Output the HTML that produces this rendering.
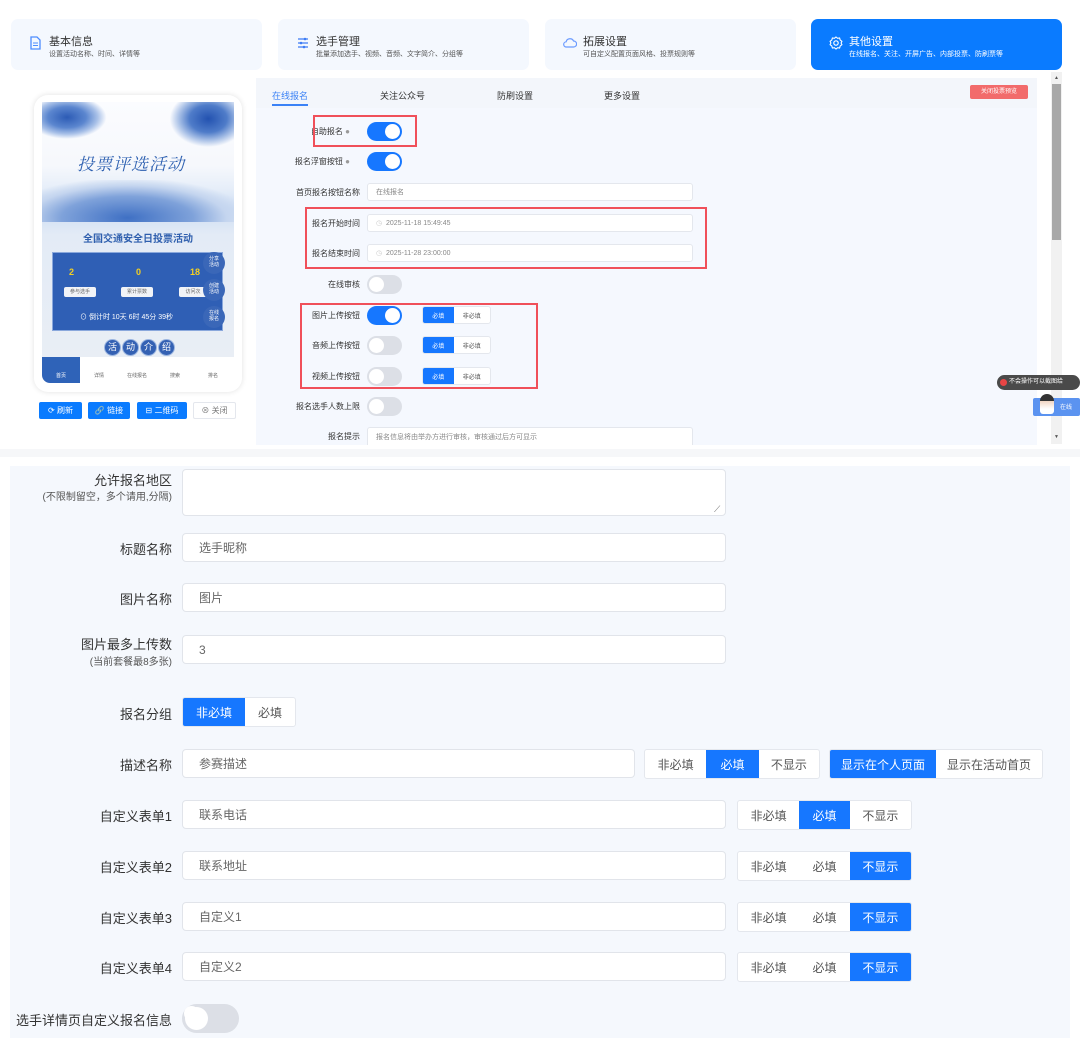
<!DOCTYPE html>
<html><head><meta charset="utf-8"><style>
*{box-sizing:border-box;margin:0;padding:0}
body{width:1080px;height:1049px;background:#fff;font-family:"Liberation Sans","Noto Sans CJK SC",sans-serif;position:relative;overflow:hidden;color:#333}
.a{position:absolute}
.card{position:absolute;top:19px;height:51px;width:251px;background:#f4f8fe;border-radius:7px}
.card .t{position:absolute;left:38px;top:14px;font-size:11px;color:#333}
.card .s{position:absolute;left:38px;top:30px;font-size:7px;color:#555;white-space:nowrap}
.card.on{background:#0a7bff}.card.on .t,.card.on .s{color:#fff}
.lbl{position:absolute;font-size:8px;color:#333;text-align:right;width:120px;white-space:nowrap}
.tg{position:absolute;width:35px;height:19px;border-radius:10px;background:#dcdfe6}
.tg::after{content:"";position:absolute;left:2px;top:2px;width:15px;height:15px;border-radius:50%;background:#fff}
.tg.on{background:#1677ff}.tg.on::after{left:18px}
.inp{position:absolute;background:#fff;border:1px solid #e4e7ed;border-radius:3px;font-size:7px;color:#888;padding-left:8px;display:flex;align-items:center}
.rb{position:absolute;border:2px solid #f0505a}
.seg{position:absolute;display:flex;border:1px solid #e4e7ed;border-radius:3px;overflow:hidden;background:#fff}
.seg div{display:flex;align-items:center;justify-content:center;color:#555}
.seg div.on{background:#1677ff;color:#fff}
.L{position:absolute;right:908px;font-size:13px;color:#333;text-align:right;white-space:nowrap}
.I{position:absolute;left:182px;width:544px;height:29px;background:#fff;border:1px solid #e1e4ea;border-radius:4px;font-size:12px;color:#666;padding-left:16px;display:flex;align-items:center}
.S{height:30px;font-size:12px}
.btn{position:absolute;top:402px;height:17px;background:#0a7bff;color:#fff;font-size:8px;display:flex;align-items:center;justify-content:center;border-radius:2px}
</style></head><body>
<!-- top cards -->
<div class="card" style="left:11px"><svg class="a" style="left:19px;top:17px" width="11" height="14" viewBox="0 0 11 14"><path d="M1 1h6l3 3v9H1z" fill="none" stroke="#4d8dff" stroke-width="1.3"/><path d="M3 7h5M3 9.5h5" stroke="#4d8dff"/></svg><div class="t">基本信息</div><div class="s">设置活动名称、时间、详情等</div></div>
<div class="card" style="left:278px"><svg class="a" style="left:19px;top:18px" width="12" height="12" viewBox="0 0 12 12"><path d="M1 2h10M1 6h10M1 10h10" stroke="#3d7cf5" stroke-width="1.2"/><circle cx="8" cy="2" r="1.3" fill="#3d7cf5"/><circle cx="4" cy="6" r="1.3" fill="#3d7cf5"/><circle cx="7" cy="10" r="1.3" fill="#3d7cf5"/></svg><div class="t">选手管理</div><div class="s">批量添加选手、视频、音频、文字简介、分组等</div></div>
<div class="card" style="left:545px"><svg class="a" style="left:18px;top:18px" width="14" height="11" viewBox="0 0 14 11"><path d="M3.5 10a2.6 2.6 0 0 1-.4-5.2A4 4 0 0 1 10.6 4a3 3 0 0 1 0 6z" fill="none" stroke="#6b9bff" stroke-width="1.2"/></svg><div class="t">拓展设置</div><div class="s">可自定义配置页面风格、投票规则等</div></div>
<div class="card on" style="left:811px"><svg class="a" style="left:18px;top:17px" width="14" height="14" viewBox="0 0 14 14"><circle cx="7" cy="7" r="2.2" fill="none" stroke="#fff" stroke-width="1.2"/><path d="M7 1l1.6 1.3 2-.3.6 2 1.7 1.3-.8 1.7.8 1.7-1.7 1.3-.6 2-2-.3L7 13l-1.6-1.3-2 .3-.6-2L1.1 8.7 1.9 7l-.8-1.7L2.8 4l.6-2 2 .3z" fill="none" stroke="#fff" stroke-width="1.1"/></svg><div class="t">其他设置</div><div class="s">在线报名、关注、开屏广告、内部投票、防刷票等</div></div>

<!-- phone -->
<div class="a" style="left:34px;top:95px;width:208px;height:297px;background:#fff;border-radius:14px;box-shadow:0 0 6px rgba(0,0,0,.12)"></div>
<div class="a" style="left:42px;top:102px;width:192px;height:255px;overflow:hidden;background:linear-gradient(#fbfcff 0,#f6f8fc 25%,#e6eef9 34%,#cdddf3 42%,#e3ebf6 52%,#e9eef5 100%)">
 <div class="a" style="left:-5px;top:-5px;width:75px;height:45px;background:radial-gradient(ellipse at 40% 45%,#2c5bb5 0,#5b86cf 30%,#a9c1e8 48%,transparent 62%)"></div>
 <div class="a" style="left:125px;top:-8px;width:75px;height:55px;background:radial-gradient(ellipse at 55% 45%,#2352b0 0,#4f7cc9 32%,#a7bfe6 50%,transparent 66%)"></div>
 <div class="a" style="left:35px;top:48px;font-size:17px;color:#2c5fb0;font-family:'Noto Serif CJK SC',serif;font-style:italic;letter-spacing:1px">投票评选活动</div>
 <div class="a" style="left:-10px;top:78px;width:212px;height:42px;background:radial-gradient(ellipse at 45% 90%,#3f70c4 0,#7fa2da 40%,#c4d5ef 60%,transparent 75%)"></div>
 <div class="a" style="left:0;top:128px;width:192px;text-align:center;font-size:10px;font-weight:bold;color:#2f5fae">全国交通安全日投票活动</div>
 <div class="a" style="left:10px;top:150px;width:171px;height:79px;background:#2f5fb5;border:1px solid #8aa8dc"></div>
 <div class="a" style="left:27px;top:165px;font-size:9px;font-weight:bold;color:#f5d020">2</div>
 <div class="a" style="left:94px;top:165px;font-size:9px;font-weight:bold;color:#f5d020">0</div>
 <div class="a" style="left:148px;top:165px;font-size:9px;font-weight:bold;color:#f5d020">18</div>
 <div class="a" style="left:22px;top:185px;width:32px;height:10px;background:#f1f3f7;border-radius:2px;font-size:5px;color:#666;text-align:center;line-height:10px">参与选手</div>
 <div class="a" style="left:79px;top:185px;width:32px;height:10px;background:#f1f3f7;border-radius:2px;font-size:5px;color:#666;text-align:center;line-height:10px">累计票数</div>
 <div class="a" style="left:137px;top:185px;width:28px;height:10px;background:#f1f3f7;border-radius:2px;font-size:5px;color:#666;text-align:center;line-height:10px">访问次</div>
 <div class="a" style="left:38px;top:210px;font-size:7px;color:#fff;white-space:nowrap">⊙ 倒计时 10天 6时 45分 39秒</div>
 <div class="a" style="left:161px;top:150px;width:22px;height:22px;border-radius:50%;background:#3a67b8;color:#fff;font-size:5px;text-align:center;padding-top:4px;line-height:6px">分享<br>活动</div>
 <div class="a" style="left:161px;top:177px;width:22px;height:22px;border-radius:50%;background:#3a67b8;color:#fff;font-size:5px;text-align:center;padding-top:4px;line-height:6px">创建<br>活动</div>
 <div class="a" style="left:161px;top:204px;width:22px;height:22px;border-radius:50%;background:#3a67b8;color:#fff;font-size:5px;text-align:center;padding-top:4px;line-height:6px">在线<br>报名</div>
 <div class="a" style="left:62px;top:237px;display:flex;gap:1px">
  <div style="width:17px;height:17px;border-radius:50%;background:#3461b3;border:1px solid #9bb5e0;color:#fff;font-size:9px;text-align:center;line-height:15px">活</div>
  <div style="width:17px;height:17px;border-radius:50%;background:#3461b3;border:1px solid #9bb5e0;color:#fff;font-size:9px;text-align:center;line-height:15px">动</div>
  <div style="width:17px;height:17px;border-radius:50%;background:#3461b3;border:1px solid #9bb5e0;color:#fff;font-size:9px;text-align:center;line-height:15px">介</div>
  <div style="width:17px;height:17px;border-radius:50%;background:#3461b3;border:1px solid #9bb5e0;color:#fff;font-size:9px;text-align:center;line-height:15px">绍</div>
 </div>
</div>
<div class="a" style="left:42px;top:357px;width:192px;height:26px;background:#fff;display:flex;font-size:5px;color:#666">
 <div style="width:38px;background:#2f63b8;color:#fff;text-align:center;padding-top:15px;border-bottom-left-radius:8px">首页</div>
 <div style="width:38px;text-align:center;padding-top:15px">详情</div>
 <div style="width:38px;text-align:center;padding-top:15px">在线报名</div>
 <div style="width:38px;text-align:center;padding-top:15px">搜索</div>
 <div style="width:38px;text-align:center;padding-top:15px">排名</div>
</div>
<div class="btn" style="left:39px;width:43px">⟳ 刷新</div>
<div class="btn" style="left:88px;width:42px">🔗 链接</div>
<div class="btn" style="left:137px;width:50px">⊟ 二维码</div>
<div class="btn" style="left:193px;width:43px;background:#fff;color:#777;border:1px solid #e4e7ed">⊗ 关闭</div>

<!-- right panel -->
<div class="a" style="left:256px;top:78px;width:781px;height:367px;background:#f5f8fe"></div>
<div class="a" style="left:256px;top:78px;width:781px;height:30px;background:#f3f6fb"></div>
<div class="a" style="left:272px;top:89px;font-size:9px;color:#3b82f6">在线报名</div>
<div class="a" style="left:272px;top:104px;width:36px;height:2px;background:#3b82f6"></div>
<div class="a" style="left:380px;top:89px;font-size:9px;color:#333">关注公众号</div>
<div class="a" style="left:497px;top:89px;font-size:9px;color:#333">防刷设置</div>
<div class="a" style="left:604px;top:89px;font-size:9px;color:#333">更多设置</div>
<div class="a" style="left:970px;top:85px;width:58px;height:14px;background:#f26b6b;border-radius:2px;color:#fff;font-size:6px;text-align:center;line-height:14px">关闭投票预览</div>
<div class="a" style="left:1051px;top:72px;width:11px;height:372px;background:#f1f1f1"></div>
<div class="a" style="left:1052px;top:84px;width:9px;height:156px;background:#a8a8a8"></div>
<div class="a" style="left:1054px;top:75px;font-size:5px;color:#555">▲</div>
<div class="a" style="left:1054px;top:434px;font-size:5px;color:#555">▼</div>

<div class="lbl" style="left:230px;top:126px">自助报名 <span style="color:#999">●</span></div>
<div class="tg on" style="left:367px;top:122px"></div>
<div class="lbl" style="left:230px;top:156px">报名浮窗按钮 <span style="color:#999">●</span></div>
<div class="tg on" style="left:367px;top:152px"></div>
<div class="lbl" style="left:240px;top:187px">首页报名按钮名称</div>
<div class="inp" style="left:367px;top:183px;width:326px;height:18px">在线报名</div>
<div class="lbl" style="left:240px;top:218px">报名开始时间</div>
<div class="inp" style="left:367px;top:214px;width:326px;height:18px"><span style="color:#ccc">◷</span>&nbsp; 2025-11-18 15:49:45</div>
<div class="lbl" style="left:240px;top:248px">报名结束时间</div>
<div class="inp" style="left:367px;top:244px;width:326px;height:18px"><span style="color:#ccc">◷</span>&nbsp; 2025-11-28 23:00:00</div>
<div class="lbl" style="left:240px;top:279px">在线审核</div>
<div class="tg" style="left:367px;top:275px"></div>
<div class="lbl" style="left:240px;top:310px">图片上传按钮</div>
<div class="tg on" style="left:367px;top:306px"></div>
<div class="lbl" style="left:240px;top:340px">音频上传按钮</div>
<div class="tg" style="left:367px;top:336px"></div>
<div class="lbl" style="left:240px;top:371px">视频上传按钮</div>
<div class="tg" style="left:367px;top:367px"></div>
<div class="seg" style="left:422px;top:306px;width:69px;height:18px;font-size:6px"><div class="on" style="width:31px">必填</div><div style="width:37px">非必填</div></div>
<div class="seg" style="left:422px;top:336px;width:69px;height:18px;font-size:6px"><div class="on" style="width:31px">必填</div><div style="width:37px">非必填</div></div>
<div class="seg" style="left:422px;top:367px;width:69px;height:18px;font-size:6px"><div class="on" style="width:31px">必填</div><div style="width:37px">非必填</div></div>
<div class="lbl" style="left:240px;top:401px">报名选手人数上限</div>
<div class="tg" style="left:367px;top:397px"></div>
<div class="lbl" style="left:240px;top:431px">报名提示</div>
<div class="inp" style="left:367px;top:427px;width:326px;height:18px;border-bottom:none;border-radius:3px 3px 0 0">报名信息将由举办方进行审核，审核通过后方可显示</div>
<div class="a" style="left:256px;top:445px;width:781px;height:4px;background:#fff"></div>
<div class="rb" style="left:313px;top:115px;width:104px;height:32px"></div>
<div class="rb" style="left:305px;top:207px;width:402px;height:62px"></div>
<div class="rb" style="left:300px;top:303px;width:238px;height:86px"></div>
<div class="a" style="left:997px;top:375px;width:83px;height:15px;background:#4a4a4a;border-radius:8px;color:#fff;font-size:6px;line-height:15px;padding-left:12px;white-space:nowrap;overflow:hidden">不会操作可以截图给</div>
<div class="a" style="left:1000px;top:379px;width:7px;height:7px;border-radius:50%;background:#e84545"></div>
<div class="a" style="left:1033px;top:398px;width:47px;height:18px;background:#5b93f0;border-radius:2px"></div>
<div class="a" style="left:1040px;top:394px;width:14px;height:20px;border-radius:7px 7px 3px 3px;background:linear-gradient(#333 0,#333 35%,#f2d6c4 36%,#fff 75%)"></div>
<div class="a" style="left:1060px;top:402px;font-size:6px;color:#fff">在线</div>
<div class="a" style="left:0;top:449px;width:1080px;height:8px;background:#f6f7f9"></div>

<!-- bottom -->
<div class="a" style="left:10px;top:466px;width:1060px;height:572px;background:#f5f8fd"></div>
<div class="L" style="top:470px">允许报名地区</div>
<div class="L" style="top:488px;font-size:10px;color:#555">(不限制留空，多个请用,分隔)</div>
<div class="I" style="top:469px;height:47px;align-items:flex-start"></div>
<div class="a" style="left:714px;top:504px;font-size:9px;color:#777">⟋</div>
<div class="L" style="top:539px">标题名称</div><div class="I" style="top:533px">选手昵称</div>
<div class="L" style="top:589px">图片名称</div><div class="I" style="top:583px">图片</div>
<div class="L" style="top:634px">图片最多上传数</div>
<div class="L" style="top:653px;font-size:10px;color:#555">(当前套餐最8多张)</div>
<div class="I" style="top:635px">3</div>
<div class="L" style="top:704px">报名分组</div>
<div class="seg S" style="left:182px;top:697px;width:114px"><div class="on" style="width:63px">非必填</div><div style="width:51px">必填</div></div>
<div class="L" style="top:755px">描述名称</div>
<div class="I" style="top:749px;width:453px">参赛描述</div>
<div class="seg S" style="left:644px;top:749px;width:176px"><div style="width:62px">非必填</div><div class="on" style="width:53px">必填</div><div style="width:61px">不显示</div></div>
<div class="seg S" style="left:829px;top:749px;width:214px"><div class="on" style="width:107px">显示在个人页面</div><div style="width:107px">显示在活动首页</div></div>
<div class="L" style="top:806px">自定义表单1</div><div class="I" style="top:800px">联系电话</div>
<div class="seg S" style="left:737px;top:800px;width:175px"><div style="width:62px">非必填</div><div class="on" style="width:51px">必填</div><div style="width:62px">不显示</div></div>
<div class="L" style="top:857px">自定义表单2</div><div class="I" style="top:851px">联系地址</div>
<div class="seg S" style="left:737px;top:851px;width:175px"><div style="width:62px">非必填</div><div style="width:51px">必填</div><div class="on" style="width:62px">不显示</div></div>
<div class="L" style="top:908px">自定义表单3</div><div class="I" style="top:902px">自定义1</div>
<div class="seg S" style="left:737px;top:902px;width:175px"><div style="width:62px">非必填</div><div style="width:51px">必填</div><div class="on" style="width:62px">不显示</div></div>
<div class="L" style="top:958px">自定义表单4</div><div class="I" style="top:952px">自定义2</div>
<div class="seg S" style="left:737px;top:952px;width:175px"><div style="width:62px">非必填</div><div style="width:51px">必填</div><div class="on" style="width:62px">不显示</div></div>
<div class="L" style="top:1010px">选手详情页自定义报名信息</div>
<div class="tg" style="left:182px;top:1004px;width:57px;height:29px;border-radius:15px"></div>
<div class="a" style="left:185px;top:1007px;width:23px;height:23px;border-radius:50%;background:#fff"></div>
</body></html>
